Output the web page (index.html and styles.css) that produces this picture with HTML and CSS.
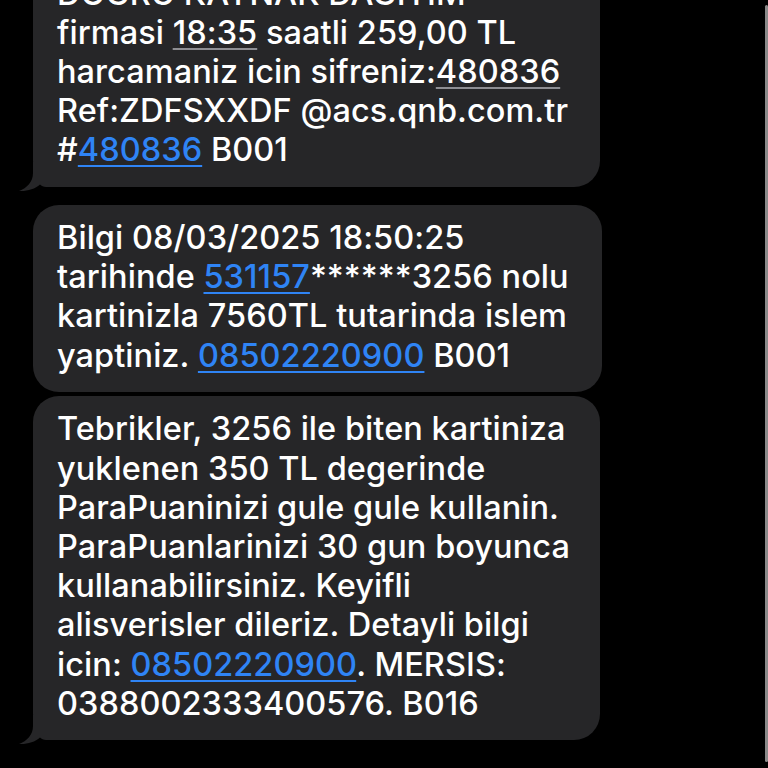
FILE: index.html
```html
<!DOCTYPE html>
<html lang="tr">
<head>
<meta charset="utf-8">
<title>Mesajlar</title>
<link rel="stylesheet" href="styles.css">
</head>
<body>
<div class="thread">
  <div class="bubble tailed gap-lg">
    <p class="msg">DOGRU KAYNAK DAGITIM<br>firmasi <span class="detect">18:35</span> saatli 259,00 TL<br>harcamaniz icin sifreniz:<span class="detect">480836</span><br>Ref:ZDFSXXDF @acs.qnb.com.tr<br>#<span class="link">480836</span> B001</p>
    <svg class="tail" width="40" height="30" viewBox="0 0 40 30"><path d="M14 0 H40 V25 H27 C24.5 25 22.5 24 21 22.5 C16 27 8 29.5 0 29 C8 26 14 20 14 11 Z"/></svg>
  </div>
  <div class="bubble wide gap-sm">
    <p class="msg">Bilgi 08/03/2025 18:50:25<br>tarihinde <span class="link">531157</span>******3256 nolu<br>kartinizla 7560TL tutarinda islem<br>yaptiniz. <span class="link">08502220900</span> B001</p>
  </div>
  <div class="bubble tailed">
    <p class="msg">Tebrikler, 3256 ile biten kartiniza<br>yuklenen 350 TL degerinde<br>ParaPuaninizi gule gule kullanin.<br>ParaPuanlarinizi 30 gun boyunca<br>kullanabilirsiniz. Keyifli<br>alisverisler dileriz. Detayli bilgi<br>icin: <span class="link">08502220900</span>. MERSIS:<br>0388002333400576. B016</p>
    <svg class="tail" width="40" height="30" viewBox="0 0 40 30"><path d="M14 0 H40 V25 H27 C24.5 25 22.5 24 21 22.5 C16 27 8 29.5 0 29 C8 26 14 20 14 11 Z"/></svg>
  </div>
</div>
<div class="scrollbar"></div>
</body>
</html>
```
FILE: styles.css
```css
html, body {
  margin: 0;
  padding: 0;
  background: #000;
  width: 768px;
  height: 768px;
  overflow: hidden;
}
body {
  position: relative;
  font-family: Inter, "Noto Sans", "Liberation Sans", sans-serif;
  color: #fff;
}
.thread {
  display: flex;
  flex-direction: column;
  align-items: flex-start;
  padding-left: 33px;
  margin-top: -40px;
}
.bubble {
  position: relative;
  width: 567px;
  box-sizing: border-box;
  background: #262628;
  border-radius: 26px;
  padding: 13.5px 6px 17px 24px;
}
.bubble.wide {
  width: 569px;
}
.gap-lg { margin-bottom: 18px; }
.gap-sm { margin-bottom: 4px; }
.msg {
  margin: 0;
  font-size: 32.5px;
  font-weight: 500;
  line-height: 39.2px;
  letter-spacing: 0.05px;
  white-space: nowrap;
}
.link {
  color: #2f84f5;
  text-decoration: underline;
  text-decoration-thickness: 2px;
  text-underline-offset: 4px;
}
.detect {
  text-decoration: underline;
  text-decoration-color: #8e8e93;
  text-decoration-thickness: 2px;
  text-underline-offset: 4px;
}
.tail {
  position: absolute;
  left: -14px;
  bottom: -5px;
  fill: #262628;
}
.scrollbar {
  position: absolute;
  right: 0;
  top: 5px;
  width: 3px;
  height: 757px;
  background: #8a8a8a;
  border-radius: 2px;
}
```
